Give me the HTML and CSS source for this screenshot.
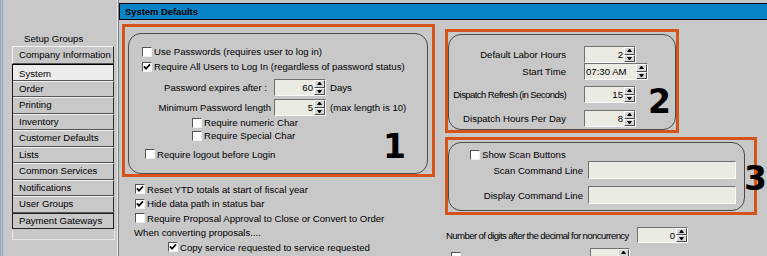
FILE: index.html
```html
<!DOCTYPE html>
<html lang="en">
<head>
    <meta charset="UTF-8">
    <meta name="viewport" content="width=device-width, initial-scale=1.0">
    <title>System Defaults</title>
    <link rel="stylesheet" href="styles.css">
</head>
<body>
    <div id="setup-window">
        <div id="setup-groups">
            <div class="groups-title">Setup Groups</div>
            <ul class="group-list">
                <li class="first">Company Information</li>
                <li class="active">System</li>
                <li>Order</li>
                <li>Printing</li>
                <li>Inventory</li>
                <li>Customer Defaults</li>
                <li>Lists</li>
                <li>Common Services</li>
                <li>Notifications</li>
                <li>User Groups</li>
                <li class="last">Payment Gateways</li>
            </ul>
            <div class="group-list-tail"></div>
        </div>

        <div id="system-defaults">
            <div class="title-bar">System Defaults</div>

            <div class="panels">
                <div class="col-left">
                    <div class="callout callout-1">
                        <div class="frame frame-1">
                            <div class="opt"><span class="check"></span>Use Passwords (requires user to log in)</div>
                            <div class="opt"><span class="check"><svg viewBox="0 0 8 8" width="8" height="8"><path d="M1 3.4 L3 5.8 L7 1.4" fill="none" stroke="#000" stroke-width="1.7"/></svg></span>Require All Users to Log In (regardless of password status)</div>
                            <div class="field-row first-field">
                                <span class="label label-expires">Password expires after :</span>
                                <span class="spinner"><span class="value">60</span><span class="arrows"><i class="up"></i><i class="down"></i></span></span>
                                <span class="after">Days</span>
                            </div>
                            <div class="field-row second-field">
                                <span class="label">Minimum Password length</span>
                                <span class="spinner"><span class="value">5</span><span class="arrows"><i class="up"></i><i class="down"></i></span></span>
                                <span class="after">(max length is 10)</span>
                            </div>
                            <div class="opt sub"><span class="check"></span>Require numeric Char</div>
                            <div class="opt sub"><span class="check"></span>Require Special Char</div>
                            <div class="opt logout"><span class="check"></span>Require logout before Login</div>
                        </div>
                        <span class="mark">1</span>
                    </div>

                    <div class="options">
                        <div class="opt"><span class="check"><svg viewBox="0 0 8 8" width="8" height="8"><path d="M1 3.4 L3 5.8 L7 1.4" fill="none" stroke="#000" stroke-width="1.7"/></svg></span>Reset YTD totals at start of fiscal year</div>
                        <div class="opt"><span class="check"><svg viewBox="0 0 8 8" width="8" height="8"><path d="M1 3.4 L3 5.8 L7 1.4" fill="none" stroke="#000" stroke-width="1.7"/></svg></span>Hide data path in status bar</div>
                        <div class="opt"><span class="check"></span>Require Proposal Approval to Close or Convert to Order</div>
                        <div class="opt note">When converting proposals....</div>
                        <div class="opt copy"><span class="check"><svg viewBox="0 0 8 8" width="8" height="8"><path d="M1 3.4 L3 5.8 L7 1.4" fill="none" stroke="#000" stroke-width="1.7"/></svg></span>Copy service requested to service requested</div>
                    </div>
                </div>

                <div class="col-right">
                    <div class="callout callout-2">
                        <div class="frame frame-2">
                            <div class="field-row">
                                <span class="label">Default Labor Hours</span>
                                <span class="spinner"><span class="value">2</span><span class="arrows"><i class="up"></i><i class="down"></i></span></span>
                            </div>
                            <div class="field-row">
                                <span class="label">Start Time</span>
                                <span class="spinner time"><span class="value">07:30 AM</span><span class="arrows"><i class="up"></i><i class="down"></i></span></span>
                            </div>
                            <div class="field-row refresh">
                                <span class="label narrow">Dispatch Refresh (in Seconds)</span>
                                <span class="spinner"><span class="value">15</span><span class="arrows"><i class="up"></i><i class="down"></i></span></span>
                            </div>
                            <div class="field-row per-day">
                                <span class="label">Dispatch Hours Per Day</span>
                                <span class="spinner"><span class="value">8</span><span class="arrows"><i class="up"></i><i class="down"></i></span></span>
                            </div>
                        </div>
                        <span class="mark">2</span>
                    </div>

                    <div class="callout callout-3">
                        <div class="frame frame-3">
                            <div class="opt scan"><span class="check"></span>Show Scan Buttons</div>
                            <div class="field-row">
                                <span class="label">Scan Command Line</span>
                                <span class="text-input"></span>
                            </div>
                            <div class="field-row display">
                                <span class="label">Display Command Line</span>
                                <span class="text-input"></span>
                            </div>
                        </div>
                        <span class="mark">3</span>
                    </div>

                    <div class="field-row digits">
                        <span class="label narrow">Number of digits after the decimal for noncurrency</span>
                        <span class="spinner"><span class="value">0</span><span class="arrows"><i class="up"></i><i class="down"></i></span></span>
                    </div>
                    <div class="field-row cut-row">
                        <span class="check"></span>
                        <span class="spacer"></span>
                        <span class="spinner small"><span class="value"></span><span class="arrows"><i class="up"></i><i class="down"></i></span></span>
                    </div>
                </div>
            </div>
        </div>
    </div>
</body>
</html>
```

FILE: styles.css
```css
body {
    margin: 0;
    background: #c8c8c8;
    font-family: "Liberation Sans", Arial, sans-serif;
    font-size: 9.6px;
    color: #000;
    overflow: hidden;
}
#setup-window {
    display: flex;
    width: 767px;
    height: 256px;
    overflow: hidden;
}

/* left list of groups */
#setup-groups {
    width: 119px;
    flex-shrink: 0;
    box-sizing: border-box;
    padding-top: 33px;
    border-left: 3px double #8ea6c0;
    border-right: 1px solid #7c7c7c;
    box-shadow: inset -1px 0 #ebebeb;
}
.groups-title {
    line-height: 12px;
    padding-left: 21px;
}
.group-list {
    list-style: none;
    margin: 1px 0 0 9px;
    padding: 0;
    width: 101px;
    border-left: 1px solid #1e1e1e;
}
.group-list li {
    box-sizing: border-box;
    height: 16.5px;
    line-height: 14px;
    padding-left: 6px;
    border-top: 1px solid #f2f2f2;
    border-right: 1px solid #2e2e2e;
    border-bottom: 1px solid #555;
    white-space: nowrap;
}
.group-list li.first {
    height: 18px;
    line-height: 16px;
    border-left: 1px solid #f2f2f2;
    margin-left: -1px;
}
.group-list li.active {
    background: #ececec;
    border-top-color: #000;
    border-left: 1px solid #000;
    margin-left: -1px;
    padding-top: 2px;
}
.group-list li.last {
    border: 1px solid #222;
    margin-left: -1px;
}
.group-list-tail {
    margin-left: 9px;
    width: 103px;
    height: 11px;
    box-sizing: border-box;
    border: 1px solid #e6e6e6;
    border-top: none;
}

/* main panel */
#system-defaults {
    flex: 1;
}
.title-bar {
    margin-top: 3px;
    height: 17px;
    box-sizing: border-box;
    border: 1px solid #000;
    border-right: none;
    background: #0784c8;
    font-weight: bold;
    font-size: 9.4px;
    line-height: 15px;
    padding-left: 5px;
}
.panels {
    display: flex;
    align-items: flex-start;
}
.col-left {
    width: 313px;
    margin: 4px 0 0 3px;
}
.col-right {
    margin: 9px 0 0 10px;
}

.callout {
    position: relative;
    box-sizing: border-box;
    border: 3px solid #d4541b;
}
.callout-1 {
    height: 153px;
    padding: 6px 4px 0 3px;
}
.callout-2 {
    width: 234px;
    height: 104px;
    padding-top: 2px;
}
.callout-3 {
    width: 312px;
    height: 78px;
    margin-top: 4px;
    padding: 2px 9px 0 0;
}
.frame {
    box-sizing: border-box;
    border: 1px solid #4a4a4a;
    border-radius: 13px;
}
.frame-1 {
    height: 141px;
    padding: 10px 0 0 13px;
}
.frame-2 {
    height: 96px;
    padding-top: 11px;
}
.frame-3 {
    height: 69px;
    padding-top: 5px;
}
.mark {
    position: absolute;
    font-family: "DejaVu Sans", sans-serif;
    font-weight: bold;
    font-size: 33px;
    line-height: 33px;
}
.callout-1 .mark { left: 258px; top: 103px; }
.callout-2 .mark { left: 200px; top: 53px; }
.callout-3 .mark { left: 296px; top: 22px; }

/* checkbox rows */
.opt {
    display: flex;
    align-items: center;
    height: 15px;
    white-space: nowrap;
}
.opt.sub {
    height: 13px;
    margin-left: 50px;
}
.opt.logout {
    height: 14px;
    margin: 5px 0 0 3px;
}
.opt.scan {
    height: 13px;
    padding-left: 21px;
}
.check {
    width: 10px;
    height: 10px;
    flex-shrink: 0;
    box-sizing: border-box;
    display: flex;
    margin-right: 2px;
    background: #fff;
    border: 1px solid;
    border-color: #555 #f0f0f0 #f0f0f0 #555;
}
.options {
    margin-top: 5px;
}
.options .opt {
    height: 14.5px;
    padding-left: 13px;
}
.options .note {
    padding-left: 12px;
}
.options .copy {
    padding-left: 46px;
}

/* label + input rows */
.field-row {
    display: flex;
    align-items: center;
    height: 17px;
    white-space: nowrap;
}
.field-row .label {
    text-align: right;
}
.frame-1 .label {
    width: 129px;
}
.frame-1 .label-expires {
    padding-right: 4px;
    box-sizing: border-box;
}
.frame-1 .first-field {
    margin-top: 5px;
}
.frame-1 .second-field {
    margin-top: 3px;
}
.frame-2 .label {
    width: 117px;
}
.frame-2 .spinner {
    margin-left: 18px;
}
.frame-2 .refresh {
    margin-top: 6px;
}
.frame-2 .per-day {
    margin-top: 7px;
}
.frame-3 .field-row {
    height: 18px;
}
.frame-3 .label {
    width: 134px;
}
.frame-3 .display {
    margin-top: 7px;
}
.narrow {
    letter-spacing: -0.6px;
}
.after {
    margin-left: 4px;
}
.field-row.digits {
    margin-top: 12px;
    height: 16px;
    padding-left: 1px;
}
.digits .label {
    width: 191px;
    text-align: left;
}
.digits .spinner {
    width: 51px;
    height: 16px;
    margin-left: 0;
}
.field-row.cut-row {
    margin-top: 5px;
    padding-left: 6px;
}
.cut-row .spacer {
    width: 124px;
}
.spinner.small {
    width: 40px;
}

.spinner {
    display: flex;
    width: 52px;
    height: 17px;
    box-sizing: border-box;
    margin-left: 3px;
    background: #ecebe3;
    border: 1px solid;
    border-color: #707070 #fafafa #fafafa #707070;
}
.spinner .value {
    flex: 1;
    text-align: right;
    line-height: 15px;
    padding-right: 1px;
}
.spinner.time {
    width: 64px;
}
.spinner.time .value {
    text-align: left;
    padding-left: 1px;
}
.arrows {
    width: 11px;
    display: flex;
    flex-direction: column;
}
.arrows i {
    flex: 1;
    display: flex;
    align-items: center;
    justify-content: center;
    background: #d6d6d6;
    border: 1px solid;
    border-color: #fff #4a4a4a #4a4a4a #fff;
}
.arrows i::after {
    content: "";
    width: 1px;
    border-left: 2px solid transparent;
    border-right: 2px solid transparent;
}
.arrows .up::after {
    border-bottom: 3px solid #000;
}
.arrows .down::after {
    border-top: 3px solid #000;
}
.text-input {
    width: 148px;
    height: 18px;
    box-sizing: border-box;
    margin-left: 5px;
    background: #ecebe3;
    border: 1px solid;
    border-color: #707070 #fafafa #fafafa #707070;
}
```
